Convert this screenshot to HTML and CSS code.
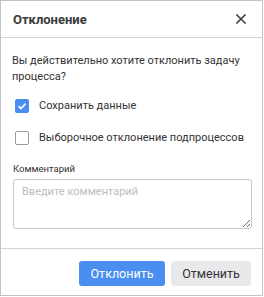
FILE: index.html
```html
<!DOCTYPE html>
<html lang="ru">
<head>
<meta charset="utf-8">
<link rel="stylesheet" href="styles.css">
</head>
<body>
<div class="dialog">
  <div class="header">
    <span class="title">Отклонение</span>
    <svg class="close" width="10" height="10" viewBox="0 0 10 10"><path d="M1 1L9 9M9 1L1 9" stroke="#444" stroke-width="1.6" stroke-linecap="square"/></svg>
  </div>
  <div class="body">
    <p class="question">Вы действительно хотите отклонить задачу процесса?</p>
    <label class="check-row first">
      <span class="box checked"><svg width="14" height="14" viewBox="0 0 14 14"><path d="M3.5 7.2L6 9.6L10.6 4.6" fill="none" stroke="#fff" stroke-width="1.6"/></svg></span>
      <span>Сохранить данные</span>
    </label>
    <label class="check-row second">
      <span class="box"></span>
      <span>Выборочное отклонение подпроцессов</span>
    </label>
    <div class="field-label">Комментарий</div>
    <textarea class="comment" placeholder="Введите комментарий"></textarea>
  </div>
  <div class="footer">
    <button class="btn primary">Отклонить</button>
    <button class="btn secondary">Отменить</button>
  </div>
</div>
</body>
</html>
```
FILE: styles.css
```css
html, body {
  margin: 0;
  padding: 0;
  background: #fff;
}
body {
  font-family: Roboto, "Noto Sans", sans-serif;
  color: #333;
}
.dialog {
  box-sizing: border-box;
  width: 263px;
  height: 296px;
  border: 1px solid #c4c4c4;
  display: flex;
  flex-direction: column;
}
.header {
  height: 37px;
  border-bottom: 1px solid #d4d4d4;
  display: flex;
  align-items: center;
  justify-content: space-between;
  padding: 0 16px 0 12px;
  box-sizing: border-box;
  flex: none;
}
.title {
  font-size: 13px;
  font-weight: 700;
  color: #3a3a3a;
}
.close {
  display: block;
}
.body {
  flex: 1;
  padding: 15px 11px 0 11px;
  display: flex;
  flex-direction: column;
}
.question {
  margin: 0;
  font-size: 11px;
  line-height: 16px;
  color: #333;
}
.check-row {
  display: flex;
  align-items: center;
  gap: 10px;
  font-size: 11px;
  line-height: 14px;
  color: #333;
  padding-left: 3px;
  white-space: nowrap;
}
.check-row.first {
  margin-top: 14px;
}
.check-row.second {
  margin-top: 18px;
}
.box {
  box-sizing: border-box;
  width: 14px;
  height: 14px;
  border: 1px solid #9a9a9a;
  border-radius: 2px;
  flex: none;
  display: flex;
}
.box.checked {
  border: none;
  background: #4a8df0;
}
.field-label {
  margin-top: 17px;
  font-size: 9.5px;
  line-height: 13px;
  color: #333;
  padding-left: 1px;
}
.comment {
  margin: 4px 0 0 1px;
  box-sizing: border-box;
  width: 239px;
  height: 50px;
  border: 1px solid #c8c8c8;
  border-radius: 3px;
  padding: 5px 8px;
  font-family: Roboto, "Noto Sans", sans-serif;
  font-size: 11px;
  color: #333;
  resize: vertical;
  outline: none;
}
.comment::placeholder {
  color: #c0bcbc;
}
.footer {
  flex: none;
  height: 47px;
  border-top: 1px solid #d4d4d4;
  box-sizing: border-box;
  display: flex;
  justify-content: flex-end;
  align-items: flex-start;
  gap: 6px;
  padding: 12px 11px 0 0;
}
.btn {
  height: 25px;
  border: none;
  border-radius: 3px;
  font-family: Roboto, "Noto Sans", sans-serif;
  font-size: 12.5px;
  padding: 0;
}
.btn.primary {
  width: 86px;
  background: #4a8ff0;
  color: #fff;
}
.btn.secondary {
  width: 80px;
  background: #e8e9eb;
  color: #333;
}
```
